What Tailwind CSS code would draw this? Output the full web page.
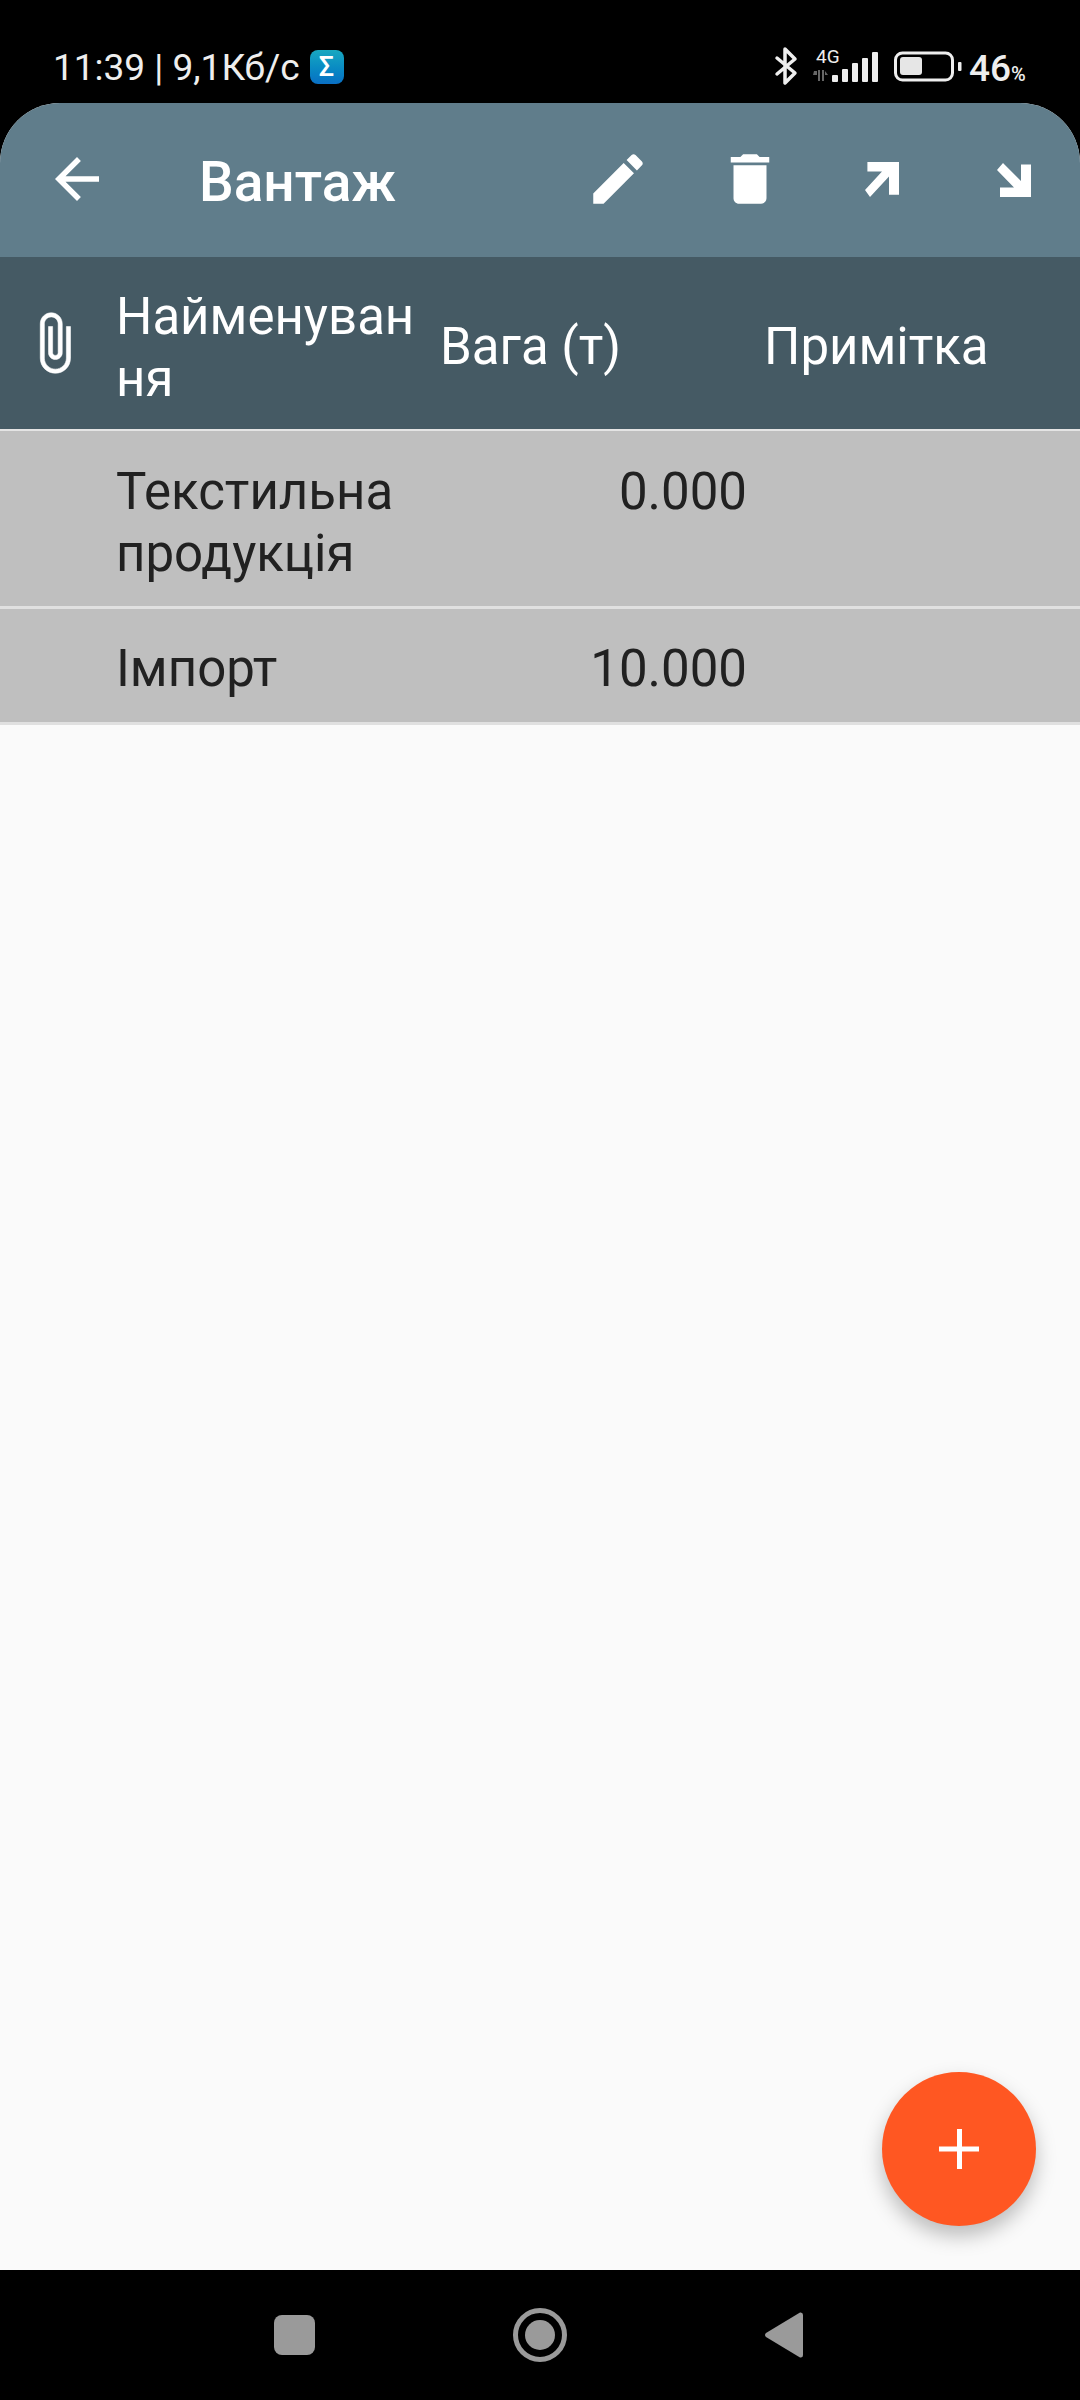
<!DOCTYPE html>
<html lang="uk">
<head>
    <meta charset="UTF-8">
    <meta name="viewport" content="width=device-width, initial-scale=1.0">
    <title>Вантаж</title>
    <script src="https://cdn.jsdelivr.net/npm/@tailwindcss/browser@4"></script>
</head>
<body class="bg-black [font-family:Roboto,sans-serif]">
    <div class="relative w-[1080px] h-[2400px] flex flex-col bg-black overflow-hidden">

        <!-- status bar -->
        <div class="h-[103px] shrink-0 flex text-[#eeeeee]">
            <div class="flex items-start pl-[53px] pt-[46px]">
                <span class="text-[37px] leading-[44px] whitespace-nowrap">11:39 | 9,1Кб/с</span>
                <div class="ml-[10px] mt-[4px] w-[34px] h-[34px] rounded-[8px] bg-gradient-to-b from-[#19a8c0] to-[#0a6fc4] flex items-center justify-center">
                    <span class="text-white text-[27px] leading-none font-medium">Σ</span>
                </div>
            </div>
            <svg class="ml-auto" width="350" height="103" viewBox="730 0 350 103" fill="none">
                <path d="M777 58 L795 73 L785 83 V49 L795 59 L777 74" stroke="#eeeeee" stroke-width="3.5" stroke-linecap="round" stroke-linejoin="round"/>
                <text x="816" y="63" font-size="19" fill="#eeeeee" font-family="Roboto">4G</text>
                <path d="M813 75h4v-4l-3 0zM818 70h2v11h-2zM822 70h2v11h-2zM825 75h3l-3-4z" fill="#666666"/>
                <rect x="832" y="75" width="6" height="7" rx="1" fill="#eeeeee"/>
                <rect x="842" y="69" width="6" height="13" rx="1" fill="#eeeeee"/>
                <rect x="852" y="63" width="6" height="19" rx="1" fill="#eeeeee"/>
                <rect x="862" y="58" width="6" height="24" rx="1" fill="#eeeeee"/>
                <rect x="872" y="52" width="6" height="30" rx="1" fill="#eeeeee"/>
                <rect x="895.5" y="53" width="57" height="27" rx="7" stroke="#eeeeee" stroke-width="3"/>
                <rect x="900" y="57" width="22" height="18" rx="3" fill="#e6e6e6"/>
                <rect x="958" y="62" width="3.5" height="9" rx="1" fill="#eeeeee"/>
                <text x="969" y="81" font-size="37" font-weight="500" fill="#eeeeee" font-family="Roboto">46</text>
                <text x="1011" y="81" font-size="20" font-weight="500" fill="#eeeeee" font-family="Roboto">%</text>
            </svg>
        </div>

        <!-- main screen -->
        <div class="flex-1 flex flex-col bg-[#fafafa] rounded-t-[60px] overflow-hidden">
            <div class="h-[154px] shrink-0 bg-[#607d8b] flex items-center text-white">
                <svg class="ml-[44px] mb-[2px] shrink-0" width="66" height="66" viewBox="0 0 24 24" fill="currentColor"><path d="M20 11H7.83l5.59-5.59L12 4l-8 8 8 8 1.41-1.41L7.83 13H20v-2z"/></svg>
                <span class="ml-[89px] mt-[5px] w-[195px] shrink-0 text-[55px] leading-none font-medium">Вантаж</span>
                <svg class="ml-[191px] mb-[2px] shrink-0" width="66" height="66" viewBox="0 0 24 24" fill="currentColor"><path d="M3 17.25V21h3.75L17.81 9.94l-3.75-3.75L3 17.25zM20.71 7.04c.39-.39.39-1.02 0-1.41l-2.34-2.34c-.39-.39-1.02-.39-1.41 0l-1.83 1.83 3.75 3.75 1.83-1.83z"/></svg>
                <svg class="ml-[66px] mb-[2px] shrink-0" width="66" height="66" viewBox="0 0 24 24" fill="currentColor"><path d="M6 19c0 1.1.9 2 2 2h8c1.1 0 2-.9 2-2V7H6v12zM19 4h-3.5l-1-1h-5l-1 1H5v2h14V4z"/></svg>
                <svg class="ml-[66px] mb-[2px] shrink-0" width="66" height="66" viewBox="0 0 66 66" fill="currentColor"><path d="M18.4 16H50V48.7H40V30.5L21 51L16 44L33 25.5H18.4z"/></svg>
                <svg class="ml-[66px] mb-[2px] shrink-0" width="66" height="66" viewBox="0 0 66 66" fill="currentColor"><path d="M16 24L22 17L40 35V18.5H50V51H19V41.5H33z"/></svg>
            </div>

            <!-- table header -->
            <div class="h-[172px] shrink-0 bg-[#455a64] flex items-start text-white text-[51px] leading-[62px]">
                <svg class="ml-[21px] mt-[53px] w-[66px] h-[66px] shrink-0" viewBox="0 0 24 24" fill="currentColor" stroke="currentColor" stroke-width="0.2"><path d="M16.5 6v11.5c0 2.21-1.79 4-4 4s-4-1.79-4-4V5c0-1.38 1.12-2.5 2.5-2.5s2.5 1.12 2.5 2.5v10.5c0 .55-.45 1-1 1s-1-.45-1-1V6H10v9.5c0 1.38 1.12 2.5 2.5 2.5s2.5-1.12 2.5-2.5V5c0-2.21-1.79-4-4-4S7 2.79 7 5v12.5c0 3.04 2.46 5.5 5.5 5.5s5.5-2.46 5.5-5.5V6h-1.5z"/></svg>
                <div class="ml-[29px] mt-[29px] w-[302px] break-all">Найменування</div>
                <div class="ml-[22px] mt-[59px] w-[324px]">Вага (т)</div>
                <div class="mt-[59px]">Примітка</div>
            </div>

            <!-- rows -->
            <div class="h-[2px] shrink-0 bg-[#e4e4e4]"></div>
            <div class="flex bg-[#bfbfbf] text-[#212121] text-[51px] leading-[62px] pt-[30px] pb-[21px]">
                <div class="ml-[116px] w-[325px]">Текстильна продукція</div>
                <div class="w-[306px] text-right">0.000</div>
            </div>
            <div class="h-[3px] shrink-0 bg-[#e0e0e0]"></div>
            <div class="flex bg-[#bfbfbf] text-[#212121] text-[51px] leading-[62px] pt-[29px] pb-[22px]">
                <div class="ml-[116px] w-[325px]">Імпорт</div>
                <div class="w-[306px] text-right">10.000</div>
            </div>
            <div class="h-[3px] shrink-0 bg-[#e0e0e0]"></div>
        </div>

        <!-- nav bar -->
        <div class="h-[130px] shrink-0 bg-black flex items-start">
            <div class="ml-[274px] mt-[45px] w-[41px] h-[40px] rounded-[8px] bg-[#9a9a9a]"></div>
            <div class="ml-[198px] mt-[38px] w-[54px] h-[54px] rounded-full border-[5px] border-[#9a9a9a] flex items-center justify-center">
                <div class="w-[30px] h-[30px] rounded-full bg-[#9a9a9a]"></div>
            </div>
            <svg class="ml-[198px] mt-[42px]" width="38" height="46" viewBox="0 0 38 46" fill="#9a9a9a"><path d="M1 21 L35 0.5 Q38 0 38 3 V43 Q38 46 35 45.5 L1 25 Q-1 23 1 21z"/></svg>
        </div>

        <!-- add button -->
        <div class="absolute left-[882px] top-[2072px] w-[154px] h-[154px] rounded-full bg-[#ff5722] shadow-[0_10px_20px_rgba(0,0,0,0.25)] flex items-center justify-center">
            <svg width="40" height="40" viewBox="0 0 40 40" fill="#ffffff"><path d="M18 0h5v17.5h17v5H23v17.5h-5V22.5H0v-5h18z"/></svg>
        </div>
    </div>
</body>
</html>
